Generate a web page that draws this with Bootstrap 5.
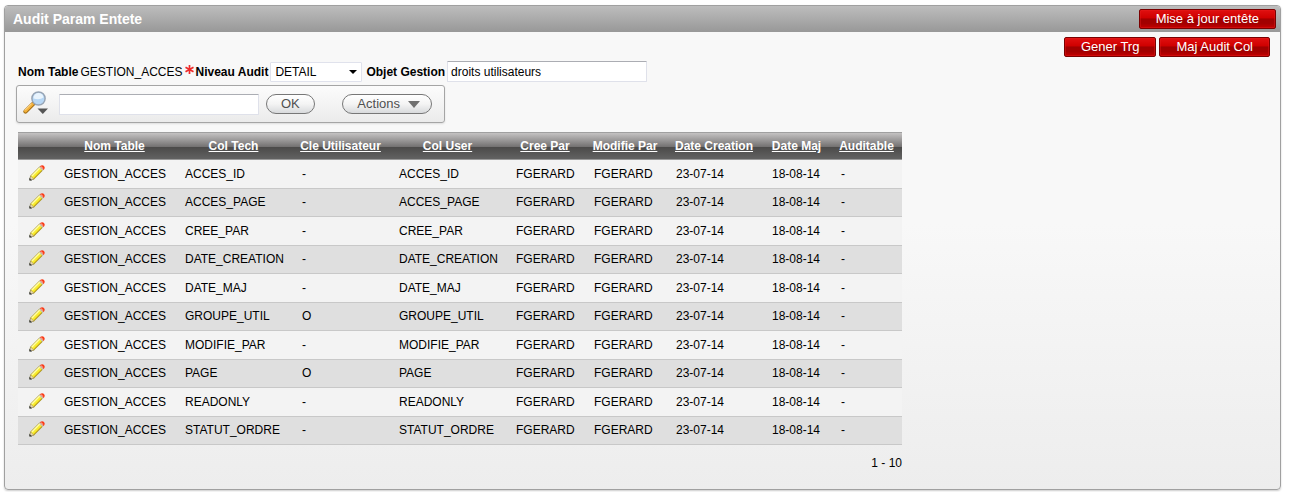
<!DOCTYPE html>
<html lang="fr">
<head>
<meta charset="utf-8">
<meta name="viewport" content="width=device-width, initial-scale=1">
<title>Audit Param Entete</title>
<link href="https://cdn.jsdelivr.net/npm/bootstrap@5.3.0/dist/css/bootstrap.min.css" rel="stylesheet">
<style>
body{font:12px/16px "Liberation Sans",Arial,sans-serif;color:#000;background:#fff;padding:5px 8px 2px 4px}
.region{border:1px solid #a0a0a0;border-radius:4px;background:linear-gradient(#f8f8f8,#f8f8f8 45%,#ededed);box-shadow:0 1px 2px #ccc}
.region-head{height:26px;padding:0 4px 0 8px;background:linear-gradient(#bdbdbd,#989898);border-radius:3px 3px 0 0}
.region-head h1{font-size:14px;line-height:18px;font-weight:700;color:#fff}
.btn-red{height:20px;padding:0 16px;font-size:13px;line-height:18px;color:#fff;border:1px solid #7a0000;border-radius:2px;background:linear-gradient(#e01010,#cf0000 44%,#a00000 50%,#a30000 75%,#c40000);box-shadow:inset 0 0 0 1px rgba(230,30,30,.4)}
.btn-red:hover{color:#fff;border-color:#500}
.toolbar-top{gap:3px;padding:5px 10px 0}
.fields{gap:2px;padding:4px 13px 0;height:25px}
.fields label{font-weight:700}
.box{height:21px;border:1px solid #dfe1ea;border-top-color:#abadb3;border-radius:1px;background:#fff;font-size:12px;line-height:16px;color:#000;padding:0 3px}
.pick{width:92px;height:20px;padding:0 14px 0 4px;margin-right:2px;appearance:none;border-color:#e0e2ec;background:#fff url("data:image/svg+xml,%3Csvg xmlns='http://www.w3.org/2000/svg' width='8' height='4'%3E%3Cpath d='M0 0h8L4 4z'/%3E%3C/svg%3E") no-repeat right 4px center}
.wide{width:200px}
.searchbar{width:429px;height:38px;margin:3px 0 0 11px;padding:0 12px 0 6px;border:1px solid #a5a5a5;border-radius:3px;background:linear-gradient(#fcfcfc,#ebebeb);box-shadow:0 1px 2px #ddd}
.searchbar .box{margin:0 7px 0 10px}
.pill{height:20px;padding:0 14px;font-size:13px;line-height:18px;color:#505050;border:1px solid #777;border-radius:10px;background:linear-gradient(#fff,#f4f4f4 50%,#d8dadc)}
.pill-menu{padding-right:11px}
.report{width:884px;margin:9px 0 0 13px}
.report table{table-layout:fixed;width:100%;border-collapse:separate;border-spacing:0}
.report th{height:28px;padding:0;text-align:center;border-top:1px solid #a0a0a0;border-bottom:1px solid #999;background:linear-gradient(#c4c2c2,#757373 52%,#4b4a49 54%,#626262)}
.report th a{color:#fff}
.report td{height:29px;padding:0 10px;white-space:nowrap;border-bottom:1px solid #c8c8c8;background:#f3f3f3}
.report tr:nth-child(even) td{height:28px;padding-bottom:2px;background:#dfdfdf}
.report .cell-edit{padding:0 0 2px 11px}
.report tr:nth-child(even) .cell-edit{padding-bottom:3px}
.pages{padding:10px 0 18px}
.c36{width:36px}.c69{width:69px}.c71{width:71px}.c78{width:78px}.c82{width:82px}.c96{width:96px}.c97{width:97px}.c117{width:117px}.c121{width:121px}
</style>
</head>
<body>
<svg class="d-none" aria-hidden="true">
<symbol id="pencil" viewBox="0 0 16 16"><path d="M.8 15 1.600 10.900 10.800 1.700 14.100 5 4.900 14.200z" fill="#f8ec2c" stroke="#a08c2c" stroke-width=".8"/><path d="M2.900 10.900 11 2.800" stroke="#fffca8" stroke-width="1.400"/><path d="M4.700 13.300 13.200 4.800" stroke="#d3b523" stroke-width="1"/><path d="M1.600 10.900 4.900 14.200.8 15z" fill="#ecd9ae" stroke="#8d8370" stroke-width=".5"/><path d="M.4 15.500v-2.700l2.700 2.700z" fill="#333a45"/><path d="M9.900 2.300 13.500 5.900l1-1-3.600-3.600z" fill="#c5c9c0"/><path d="M10.900 1.300Q13 -.5 15 .9 16.600 3 14.500 4.900z" fill="#fa3c18"/><path d="M11.900 1.600l2 2" stroke="#f79e8a" stroke-width="1.300"/></symbol>
</svg>
<main class="region">
<header class="region-head d-flex align-items-center justify-content-between"><h1 class="m-0">Audit Param Entete</h1><button type="button" class="btn btn-red">Mise à jour entête</button></header>
<div class="toolbar-top d-flex justify-content-end"><button type="button" class="btn btn-red">Gener Trg</button><button type="button" class="btn btn-red">Maj Audit Col</button></div>
<form class="fields d-flex align-items-center">
<label for="nom">Nom Table</label><output id="nom">GESTION_ACCES</output>
<span class="d-flex align-items-center"><svg width="11" height="16" viewBox="0 0 11 16" aria-label="obligatoire"><path d="M5.500 1v9M1.500 3.200l8 4.600M1.500 7.800l8-4.600" stroke="#ee2b2b" stroke-width="1.700"/></svg><label for="niveau">Niveau Audit</label></span><select id="niveau" class="box pick"><option>DETAIL</option></select>
<label for="objet">Objet Gestion</label><input id="objet" class="box wide" type="text" value="droits utilisateurs">
</form>
<form class="searchbar d-flex align-items-center" role="search">
<svg width="26" height="26" viewBox="0 0 26 26" aria-hidden="true"><path d="M2.500 20.500 10 13" stroke="#a06d16" stroke-width="4.200" stroke-linecap="round"/><path d="M2.500 20 9.500 13" stroke="#f4b13a" stroke-width="3" stroke-linecap="round"/><path d="M2 19.300 8.500 12.800" stroke="#ffe09a"/><circle cx="15.500" cy="7.500" r="6.600" fill="#b7d7f5" stroke="#98a5b5" stroke-width="1.500"/><path d="M10.500 7.500a5 5 0 0 1 10-1q-4 3-10 1z" fill="#e9f4fd"/><path d="M14.500 17.500H25L19.800 23z" fill="#555"/></svg>
<input class="box wide" type="text" aria-label="Rechercher"><button type="button" class="btn pill">OK</button>
<button type="button" class="btn pill pill-menu d-flex align-items-center ms-auto">Actions<svg class="ms-2" width="12" height="7" viewBox="0 0 12 7" aria-hidden="true"><path d="M0 0h12L6 7z" fill="#707070"/></svg></button>
</form>
<section class="report">
<table><colgroup><col class="c36"><col class="c121"><col class="c117"><col class="c97"><col class="c117"><col class="c78"><col class="c82"><col class="c96"><col class="c69"><col class="c71"></colgroup>
<thead><tr><th aria-label="Modifier"></th><th><a href="#">Nom Table</a></th><th><a href="#">Col Tech</a></th><th><a href="#">Cle Utilisateur</a></th><th><a href="#">Col User</a></th><th><a href="#">Cree Par</a></th><th><a href="#">Modifie Par</a></th><th><a href="#">Date Creation</a></th><th><a href="#">Date Maj</a></th><th><a href="#">Auditable</a></th></tr></thead>
<tbody id="rows"></tbody></table>
<div class="pages text-end">1 - 10</div>
</section>
</main>
<script src="https://cdn.jsdelivr.net/npm/bootstrap@5.3.0/dist/js/bootstrap.bundle.min.js"></script>
<script>
const columns = ['ACCES_ID','ACCES_PAGE','CREE_PAR','DATE_CREATION','DATE_MAJ','GROUPE_UTIL','MODIFIE_PAR','PAGE','READONLY','STATUT_ORDRE'];
const keys = ['GROUPE_UTIL','PAGE'];
document.getElementById('rows').innerHTML = columns.map(c => {
  const cells = ['GESTION_ACCES', c, keys.includes(c) ? 'O' : '-', c, 'FGERARD', 'FGERARD', '23-07-14', '18-08-14', '-'];
  return `<tr><td class="cell-edit"><a href="#" aria-label="Modifier ${c}"><svg class="d-block" width="16" height="16"><use href="#pencil"/></svg></a></td>` + cells.map(v => `<td>${v}</td>`).join('') + '</tr>';
}).join('');
</script>
</body>
</html>
